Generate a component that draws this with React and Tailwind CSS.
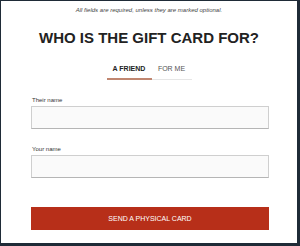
import React, { useState } from "react";

const App = () => {
  const [tab, setTab] = useState("friend");

  return (
    <div className="w-[300px] h-[246px] bg-[#1f2b37] pt-px pl-px" style={{ fontFamily: '"Liberation Sans", Arial, sans-serif' }}>
      <div className="w-[296px] h-[242px] bg-white flex flex-col">
        <p className="mt-[5px] text-center text-[6px] leading-[8px] italic text-[#444]">
          All fields are required, unless they are marked optional.
        </p>
        <h1 className="mt-[15px] text-center text-[15px] leading-[18px] font-bold text-[#222]">
          WHO IS THE GIFT CARD FOR?
        </h1>

        <div className="mt-[18px] flex justify-center">
          <button
            onClick={() => setTab("friend")}
            className={`w-[45px] pb-[5px] text-[7px] leading-[8px] ${
              tab === "friend"
                ? "font-bold text-[#222] border-b-2 border-[#c08670]"
                : "text-[#555] border-b border-[#e6e6e6] pb-[6px]"
            }`}
          >
            A FRIEND
          </button>
          <button
            onClick={() => setTab("me")}
            className={`w-[40px] pb-[5px] text-[7px] leading-[8px] ${
              tab === "me"
                ? "font-bold text-[#222] border-b-2 border-[#c08670]"
                : "text-[#555] border-b border-[#e6e6e6] pb-[6px]"
            }`}
          >
            FOR ME
          </button>
        </div>

        <div className="px-[30px] flex flex-col">
          <label className="mt-[16px] pl-px text-[6px] leading-[8px] text-[#333]">Their name</label>
          <input className="mt-[2px] h-[23px] w-[238px] bg-[#fafafa] border border-[#cfcfcf] border-b-[#b5b5b5]" />

          <label className="mt-[16px] pl-px text-[6px] leading-[8px] text-[#333]">Your name</label>
          <input className="mt-[2px] h-[23px] w-[238px] bg-[#fafafa] border border-[#cfcfcf] border-b-[#b5b5b5]" />

          <button className="mt-[29px] h-[23px] w-[238px] bg-[#b72f19] text-white text-[7px] leading-[8px]">
            SEND A PHYSICAL CARD
          </button>
        </div>
      </div>
    </div>
  );
};

export default App;
